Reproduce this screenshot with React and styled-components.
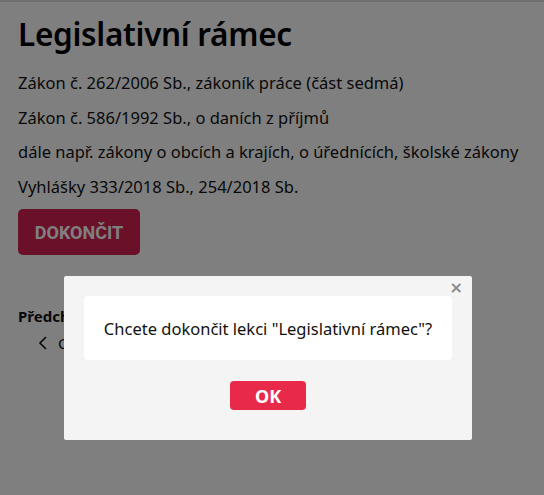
import React from "react";
import styled, { createGlobalStyle } from "styled-components";

const GlobalStyle = createGlobalStyle`
  html, body {
    margin: 0;
    padding: 0;
    background: #ffffff;
  }
  body {
    font-family: "Noto Sans", "Liberation Sans", sans-serif;
    color: #111111;
  }
`;

const TopBar = styled.div`
  height: 2px;
  background: #dddddd;
`;

const Page = styled.main`
  padding: 10px 18px 0;
`;

const Title = styled.h1`
  margin: 0 0 15px;
  font-size: 31.5px;
  font-weight: 600;
  line-height: 44px;
  letter-spacing: -0.3px;
  color: #000;
`;

const Para = styled.p`
  margin: 0 0 10px;
  font-size: 16.5px;
  line-height: 24.5px;
  color: #111;
`;

const FinishButton = styled.button`
  margin-top: 0;
  width: 122px;
  height: 46px;
  border: 0;
  border-radius: 5px;
  background: #d62052;
  color: #ffffff;
  font-family: "Roboto", "Liberation Sans", sans-serif;
  font-weight: 700;
  font-size: 18px;
  cursor: pointer;
`;

const Nav = styled.section`
  margin-top: 50px;
`;

const NavTitle = styled.h4`
  margin: 0;
  font-size: 15px;
  font-weight: 700;
  line-height: 22px;
`;

const NavLink = styled.div`
  display: flex;
  align-items: center;
  gap: 10px;
  margin: 6px 0 0 20px;
  font-size: 15px;
`;

const Overlay = styled.div`
  position: fixed;
  inset: 0;
  background: rgba(0, 0, 0, 0.5);
`;

const Modal = styled.div`
  position: relative;
  box-sizing: border-box;
  width: 408px;
  margin: 276px 0 0 64px;
  padding: 20px 20px 30px;
  background: #f4f4f4;
  border-radius: 2px;
  display: flex;
  flex-direction: column;
  align-items: center;
  gap: 21px;
`;

const Close = styled.button`
  position: absolute;
  top: 4px;
  right: 9px;
  padding: 0;
  border: 0;
  background: none;
  color: #8a8a8a;
  font-family: "DejaVu Sans", sans-serif;
  font-weight: 700;
  font-size: 16px;
  line-height: 16px;
  cursor: pointer;
`;

const Message = styled.div`
  box-sizing: border-box;
  width: 100%;
  height: 64px;
  display: flex;
  align-items: center;
  justify-content: center;
  background: #ffffff;
  border-radius: 4px;
  font-size: 16.5px;
  color: #111;
`;

const OkButton = styled.button`
  width: 76px;
  height: 29px;
  border: 0;
  border-radius: 4px;
  background: #e8294a;
  color: #ffffff;
  font-family: "Noto Sans", sans-serif;
  font-weight: 700;
  font-size: 18px;
  cursor: pointer;
`;

const paragraphs = [
  "Zákon č. 262/2006 Sb., zákoník práce (část sedmá)",
  "Zákon č. 586/1992 Sb., o daních z příjmů",
  "dále např. zákony o obcích a krajích, o úřednících, školské zákony",
  "Vyhlášky 333/2018 Sb., 254/2018 Sb.",
];

export default function App() {
  return (
    <>
      <GlobalStyle />
      <TopBar />
      <Page>
        <Title>Legislativní rámec</Title>
        {paragraphs.map((p) => (
          <Para key={p}>{p}</Para>
        ))}
        <FinishButton>DOKONČIT</FinishButton>
        <Nav>
          <NavTitle>Předchozí lekce</NavTitle>
          <NavLink>
            <svg width="10" height="14" viewBox="0 0 10 14">
              <path d="M8 1 L2 7 L8 13" fill="none" stroke="#111" strokeWidth="1.6" />
            </svg>
            <span>Co je to personalistika</span>
          </NavLink>
        </Nav>
      </Page>
      <Overlay>
        <Modal>
          <Close aria-label="Zavřít">×</Close>
          <Message>Chcete dokončit lekci "Legislativní rámec"?</Message>
          <OkButton>OK</OkButton>
        </Modal>
      </Overlay>
    </>
  );
}
